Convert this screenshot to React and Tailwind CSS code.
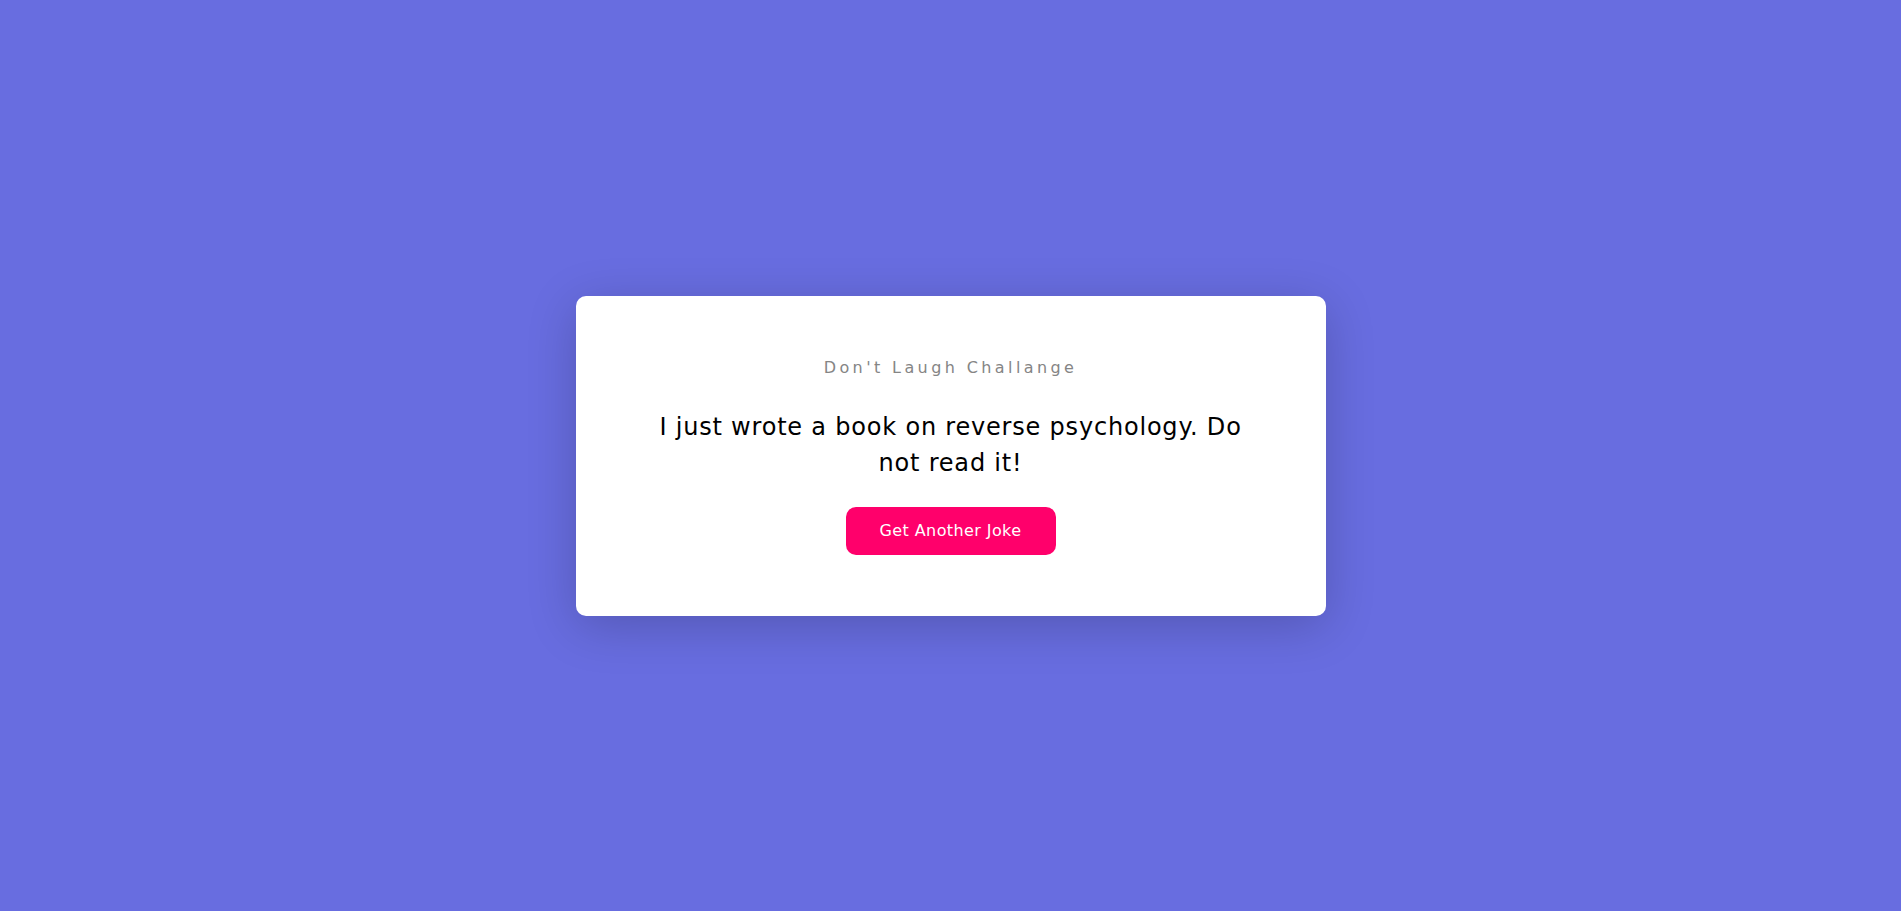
export default function App() {
  return (
    <div
      className="min-h-screen w-full bg-[#686de0] flex items-center justify-center"
      style={{ fontFamily: '"DejaVu Sans", "Open Sans", sans-serif' }}
    >
      <div className="w-[750px] bg-white rounded-[10px] shadow-[0_10px_50px_rgba(0,0,0,0.2)] pt-[60px] pb-[61px] px-[50px] flex flex-col items-center text-center">
        <h3 className="text-[16px] leading-[24px] tracking-[3.4px] text-[#858585] font-normal">
          Don't Laugh Challange
        </h3>
        <div className="mt-[29px] w-[640px] text-[24px] leading-[36px] tracking-[0.8px] text-black">
          I just wrote a book on reverse psychology. Do
          <br />
          not read it!
        </div>
        <button className="mt-[26px] h-[48px] w-[210px] rounded-[10px] bg-[#ff006b] text-white text-[16px] tracking-[0.4px]">
          Get Another Joke
        </button>
      </div>
    </div>
  );
}
